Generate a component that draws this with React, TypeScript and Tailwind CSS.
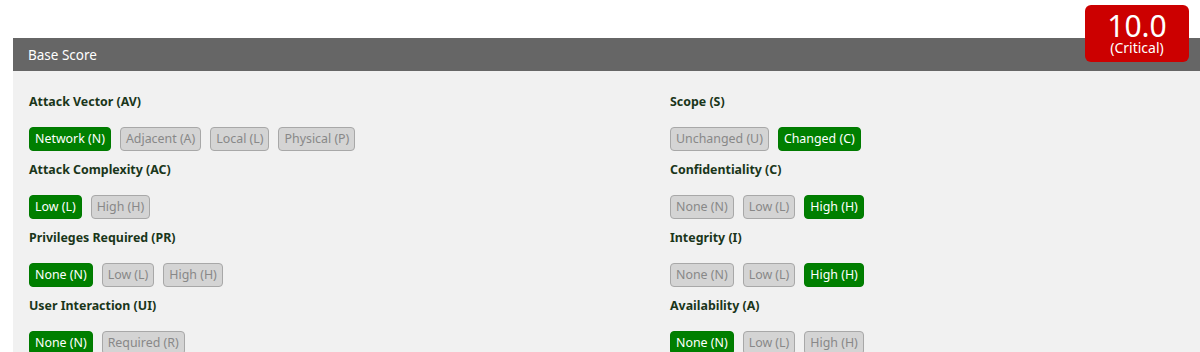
const metrics = [
  [
    { name: "Attack Vector (AV)", opts: ["Network (N)", "Adjacent (A)", "Local (L)", "Physical (P)"], sel: 0 },
    { name: "Attack Complexity (AC)", opts: ["Low (L)", "High (H)"], sel: 0 },
    { name: "Privileges Required (PR)", opts: ["None (N)", "Low (L)", "High (H)"], sel: 0 },
    { name: "User Interaction (UI)", opts: ["None (N)", "Required (R)"], sel: 0 },
  ],
  [
    { name: "Scope (S)", opts: ["Unchanged (U)", "Changed (C)"], sel: 1 },
    { name: "Confidentiality (C)", opts: ["None (N)", "Low (L)", "High (H)"], sel: 2 },
    { name: "Integrity (I)", opts: ["None (N)", "Low (L)", "High (H)"], sel: 2 },
    { name: "Availability (A)", opts: ["None (N)", "Low (L)", "High (H)"], sel: 0 },
  ],
];

type Metric = { name: string; opts: string[]; sel: number };

function MetricGroup({ name, opts, sel }: Metric) {
  return (
    <div className="mb-[9px]">
      <p className="h-5 text-[12.4px] leading-5 font-bold text-[#1a361a]">{name}</p>
      <div className="mt-[15px] flex gap-[9px]">
        {opts.map((o, i) => (
          <span
            key={o}
            className={
              i === sel
                ? "h-6 px-[5px] rounded-[4px] border border-[#007a00] bg-[#007f00] text-white text-[12.4px] leading-[22px]"
                : "h-6 px-[5px] rounded-[4px] border border-[#a8a8a8] bg-[#d4d4d4] text-[#888] text-[12.4px] leading-[22px]"
            }
          >
            {o}
          </span>
        ))}
      </div>
    </div>
  );
}

export default function App() {
  return (
    <div className="relative h-[352px] w-[1200px] overflow-hidden bg-white pt-[38px] font-['Noto_Sans','Open_Sans',sans-serif]">
      <div className="ml-[13px] bg-[#f1f1f1] h-full">
        <div className="h-[33px] bg-[#666] px-[15px] pt-[1px] text-[13.5px] leading-[33px] text-white">Base Score</div>
        <div className="grid grid-cols-[641px_1fr] pl-4 pt-[21px]">
          {metrics.map((col, ci) => (
            <div key={ci}>
              {col.map((m) => (
                <MetricGroup key={m.name} {...m} />
              ))}
            </div>
          ))}
        </div>
      </div>
      <div className="absolute right-[11px] top-[5px] flex h-[57px] w-[104px] flex-col items-center rounded-[6px] bg-[#cc0000] text-white">
        <span className="mt-[6px] text-[30px] leading-[30px]">10.0</span>
        <span className="text-[14px] leading-[14px]">(Critical)</span>
      </div>
    </div>
  );
}
